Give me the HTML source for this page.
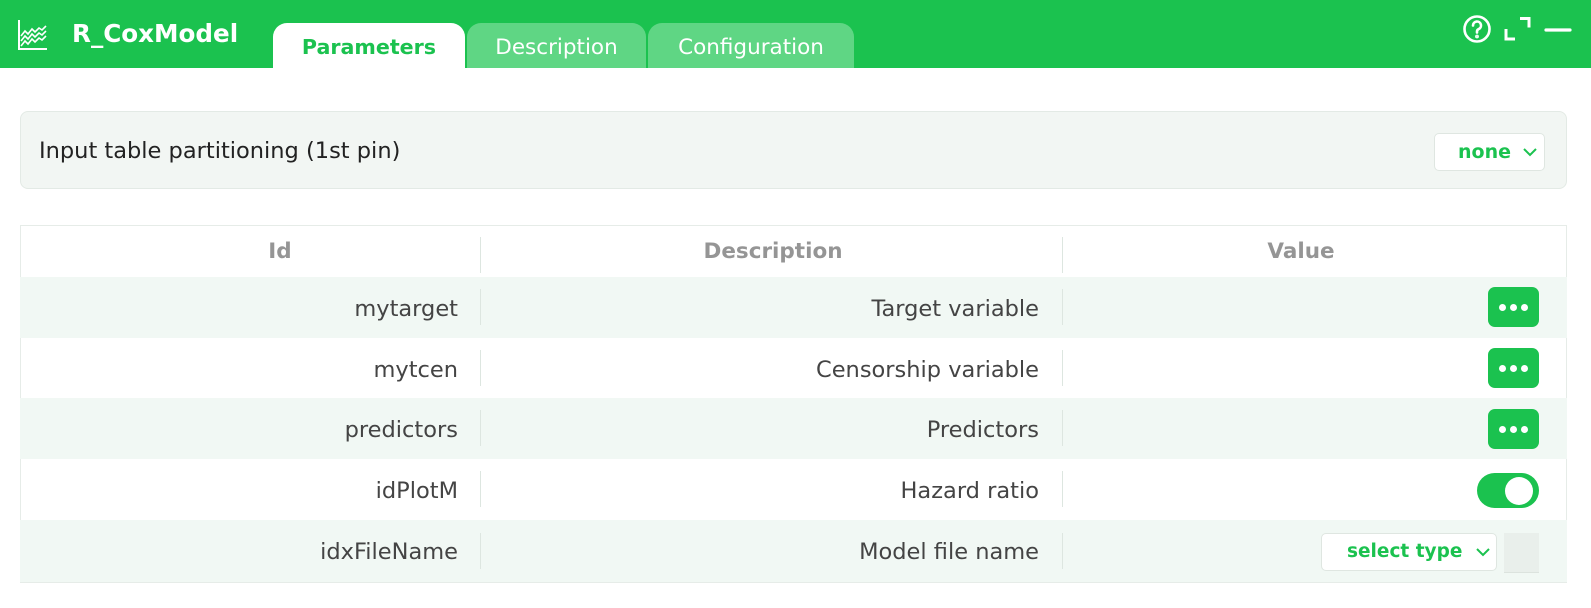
<!DOCTYPE html>
<html><head><meta charset="utf-8"><style>
*{margin:0;padding:0;box-sizing:border-box}
body{width:1591px;height:608px;background:#fff;font-family:"DejaVu Sans","Liberation Sans",sans-serif;position:relative;overflow:hidden;color:#3c3c3c}
.a{position:absolute}
.hdr{left:0;top:0;width:1591px;height:68px;background:#1bc24f}
.tab{top:23px;height:45px;border-radius:14px 14px 0 0;background:#5fd684;color:#fff;font-size:21.5px;text-align:center;line-height:49px}
.row{left:20px;width:1547px;height:61px}
.alt{background:#f1f8f4}
.sep{width:1px;height:36px;background:#dde6e0}
.t{font-size:22.5px;line-height:61px;text-align:right;color:#444}
.th{font-size:21.5px;font-weight:bold;color:#959595;line-height:50px;text-align:center}
.btn{left:1488px;width:51px;height:40px;background:#1bc24f;border-radius:7px}
.btn i{position:absolute;top:17px;width:7px;height:7px;border-radius:50%;background:#fff}
</style></head><body>
<div class="a hdr"></div>
<svg class="a" style="left:16px;top:18px" width="34" height="34" viewBox="0 0 34 34" fill="none" stroke="#fff" stroke-width="2">
<path d="M3 2V31H31"/>
<path d="M5 18l4-5 3 3 4-5 3 3 4-4 3 2 4-4" stroke-width="1.6"/>
<path d="M5 23l4-5 3 3 4-5 3 3 4-4 3 2 4-4" stroke-width="1.6"/>
<path d="M5 28l4-5 3 3 4-5 3 3 4-4 3 2 4-4" stroke-width="1.6"/>
</svg>
<div class="a" style="left:72px;top:19px;font-size:24.6px;font-weight:bold;color:#fff">R_CoxModel</div>
<div class="a tab" style="left:273px;width:192px;background:#fff;color:#1bc24f;font-weight:bold;font-size:20.6px">Parameters</div>
<div class="a tab" style="left:467px;width:179px">Description</div>
<div class="a tab" style="left:648px;width:206px">Configuration</div>
<svg class="a" style="left:1460px;top:13px" width="120" height="34" viewBox="0 0 120 34" fill="none" stroke="#fff" stroke-width="2.6" stroke-linecap="round">
<circle cx="17" cy="16" r="12.5"/>
<path d="M13 12.5a4 4 0 1 1 5.5 3.7c-1 .5-1.5 1.2-1.5 2.3v1"/>
<circle cx="17" cy="23.5" r=".6" fill="#fff"/>
<path d="M60 5.5h9v9M46 16v10h9" stroke-width="3" stroke-linecap="butt"/>
<path d="M86 17H110" stroke-width="3.2"/>
</svg>
<div class="a" style="left:20px;top:111px;width:1547px;height:78px;background:#f2f6f3;border:1px solid #e3eae5;border-radius:8px"></div>
<div class="a" style="left:39px;top:138px;font-size:22.5px;color:#222">Input table partitioning (1st pin)</div>
<div class="a" style="left:1434px;top:133px;width:111px;height:38px;background:#fff;border:1px solid #dfe6e1;border-radius:5px"></div>
<div class="a" style="left:1458px;top:141px;font-size:19px;font-weight:bold;color:#1bc24f">none</div>
<svg class="a" style="left:1523px;top:148px" width="14" height="9"><path d="M1 1l6 6 6-6" stroke="#1bc24f" stroke-width="2" fill="none"/></svg>

<div class="a" style="left:20px;top:225px;width:1547px;height:358px;border:1px solid #e6ece8"></div>
<div class="a th" style="left:20px;top:227px;width:520px">Id</div>
<div class="a th" style="left:480px;top:227px;width:586px">Description</div>
<div class="a th" style="left:1062px;top:227px;width:478px">Value</div>
<div class="a sep" style="left:480px;top:237px"></div>
<div class="a sep" style="left:1062px;top:237px"></div>

<div class="a row alt" style="top:277px"></div>
<div class="a row" style="top:338px"></div>
<div class="a row alt" style="top:398px"></div>
<div class="a row" style="top:459px"></div>
<div class="a row alt" style="top:520px;height:62px"></div>

<div class="a t" style="left:20px;width:438px;top:279px">mytarget</div>
<div class="a t" style="left:20px;width:438px;top:340px">mytcen</div>
<div class="a t" style="left:20px;width:438px;top:400px">predictors</div>
<div class="a t" style="left:20px;width:438px;top:461px">idPlotM</div>
<div class="a t" style="left:20px;width:438px;top:522px">idxFileName</div>
<div class="a t" style="left:480px;width:559px;top:279px">Target variable</div>
<div class="a t" style="left:480px;width:559px;top:340px">Censorship variable</div>
<div class="a t" style="left:480px;width:559px;top:400px">Predictors</div>
<div class="a t" style="left:480px;width:559px;top:461px">Hazard ratio</div>
<div class="a t" style="left:480px;width:559px;top:522px">Model file name</div>

<div class="a sep" style="left:480px;top:289px"></div><div class="a sep" style="left:1062px;top:289px"></div>
<div class="a sep" style="left:480px;top:350px"></div><div class="a sep" style="left:1062px;top:350px"></div>
<div class="a sep" style="left:480px;top:410px"></div><div class="a sep" style="left:1062px;top:410px"></div>
<div class="a sep" style="left:480px;top:471px"></div><div class="a sep" style="left:1062px;top:471px"></div>
<div class="a sep" style="left:480px;top:533px"></div><div class="a sep" style="left:1062px;top:533px"></div>

<div class="a btn" style="top:287px"><i style="left:11px"></i><i style="left:22px"></i><i style="left:33px"></i></div>
<div class="a btn" style="top:348px"><i style="left:11px"></i><i style="left:22px"></i><i style="left:33px"></i></div>
<div class="a btn" style="top:409px"><i style="left:11px"></i><i style="left:22px"></i><i style="left:33px"></i></div>
<div class="a" style="left:1477px;top:473px;width:62px;height:35px;border-radius:18px;background:#1bc24f"></div>
<div class="a" style="left:1505px;top:477px;width:28px;height:28px;border-radius:50%;background:#fff"></div>
<div class="a" style="left:1321px;top:533px;width:176px;height:38px;background:#fff;border:1px solid #dfe6e1;border-radius:5px"></div>
<div class="a" style="left:1347px;top:541px;font-size:18.5px;font-weight:bold;color:#1bc24f">select type</div>
<svg class="a" style="left:1476px;top:548px" width="14" height="9"><path d="M1 1l6 6 6-6" stroke="#1bc24f" stroke-width="2" fill="none"/></svg>
<div class="a" style="left:1504px;top:533px;width:35px;height:40px;background:#e9efeb;border-bottom:1px solid #dce3de"></div>
</body></html>
